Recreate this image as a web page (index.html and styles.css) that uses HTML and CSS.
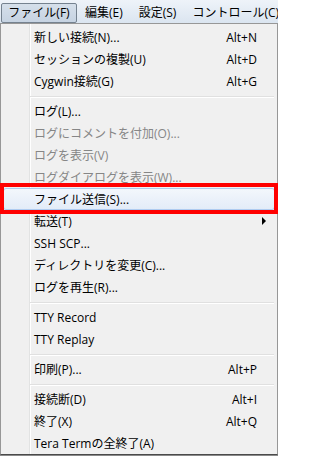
FILE: index.html
```html
<!DOCTYPE html>
<html lang="ja">
<head>
<meta charset="utf-8">
<title>Tera Term ファイルメニュー</title>
<link rel="stylesheet" href="styles.css">
</head>
<body>
<div class="menubar">
  <span class="mb-item active">ファイル(F)</span>
  <span class="mb-item">編集(E)</span>
  <span class="mb-item">設定(S)</span>
  <span class="mb-item">コントロール(C)</span>
</div>
<div class="menu">
  <div class="item"><span>新しい接続(N)...</span><span class="key">Alt+N</span></div>
  <div class="item"><span>セッションの複製(U)</span><span class="key">Alt+D</span></div>
  <div class="item"><span>Cygwin接続(G)</span><span class="key">Alt+G</span></div>
  <div class="sep"></div>
  <div class="item"><span>ログ(L)...</span></div>
  <div class="item disabled"><span>ログにコメントを付加(O)...</span></div>
  <div class="item disabled"><span>ログを表示(V)</span></div>
  <div class="item disabled"><span>ログダイアログを表示(W)...</span></div>
  <div class="item selected"><span>ファイル送信(S)...</span></div>
  <div class="item"><span>転送(T)</span><span class="arrow"></span></div>
  <div class="item"><span>SSH SCP...</span></div>
  <div class="item"><span>ディレクトリを変更(C)...</span></div>
  <div class="item"><span>ログを再生(R)...</span></div>
  <div class="sep"></div>
  <div class="item"><span>TTY Record</span></div>
  <div class="item"><span>TTY Replay</span></div>
  <div class="sep"></div>
  <div class="item"><span>印刷(P)...</span><span class="key">Alt+P</span></div>
  <div class="sep"></div>
  <div class="item"><span>接続断(D)</span><span class="key">Alt+I</span></div>
  <div class="item"><span>終了(X)</span><span class="key">Alt+Q</span></div>
  <div class="item"><span>Tera Termの全終了(A)</span></div>
</div>
<div class="annotation"></div>
</body>
</html>
```
FILE: styles.css
```css
html, body {
  margin: 0;
  padding: 0;
  width: 278px;
  height: 458px;
  overflow: hidden;
  background: #ffffff;
}
body {
  position: relative;
  font-family: "Open Sans", "Noto Sans CJK JP", sans-serif;
  font-size: 12px;
  color: #000;
}
.menubar {
  height: 23px;
  display: flex;
  align-items: center;
  background: linear-gradient(#eef3f9, #dbe5f0);
  white-space: nowrap;
  overflow: hidden;
}
.mb-item {
  flex: none;
  height: 19px;
  line-height: 19px;
  padding: 0 8px;
  margin-top: 2px;
}
.mb-item.active {
  margin-left: 1px;
  padding: 0;
  width: 74px;
  text-align: center;
  border: 1px solid #75828f;
  border-radius: 2px;
  background: linear-gradient(#d5dfea, #c6d3e2);
  height: 18px;
  line-height: 18px;
}
.menu {
  border: 1px solid #979797;
  border-bottom: 1px solid #4a4a4a;
  box-shadow: 0 1px 0 #8a8a8a;
  padding: 2px 2px 0 2px;
  background:
    linear-gradient(to right, #f0f0f0 0 28px, #e2e3e3 28px 29px, #ffffff 29px 30px, #f0f0f0 30px);
}
.item {
  height: 22px;
  display: flex;
  align-items: center;
  justify-content: space-between;
  padding: 0 18px 0 31px;
  box-sizing: border-box;
  white-space: nowrap;
}
.item.disabled {
  color: #868686;
}
.item.selected {
  border: 1px solid #aecbf0;
  border-radius: 3px;
  background: linear-gradient(#f3f7fc, #e3ecf8);
  padding: 0 17px 0 30px;
}
.key {
  text-align: right;
}
.arrow {
  width: 0;
  height: 0;
  border-top: 4px solid transparent;
  border-bottom: 4px solid transparent;
  border-left: 4px solid #000;
  margin-right: -9px;
}
.sep {
  height: 8px;
  margin: 0 1px 0 27px;
  background: linear-gradient(transparent 0 4px, #e0e0e0 4px 5px, #ffffff 5px 6px, transparent 6px);
}
.annotation {
  position: absolute;
  left: 0;
  top: 183px;
  width: 278px;
  height: 31px;
  box-sizing: border-box;
  border: 4px solid #ff0000;
}
```
